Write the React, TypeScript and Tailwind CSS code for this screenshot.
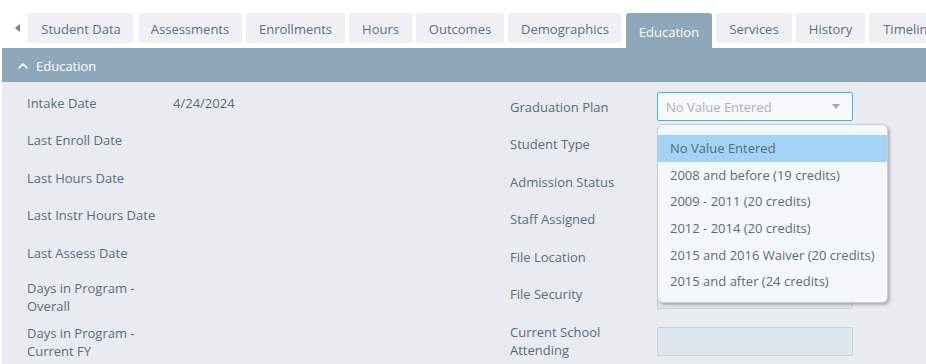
import { ChevronUp } from 'lucide-react';

const tabs = [
  { label: 'Student Data', width: 'w-[106px]' },
  { label: 'Assessments', width: 'w-[104px]' },
  { label: 'Enrollments', width: 'w-[99px]' },
  { label: 'Hours', width: 'w-[63px]' },
  { label: 'Outcomes', width: 'w-[88px]' },
  { label: 'Demographics', width: 'w-[114px]' },
  { label: 'Education', width: 'w-[86px]', active: true },
  { label: 'Services', width: 'w-[76px]' },
  { label: 'History', width: 'w-[69px]' },
  { label: 'Timeline', width: 'w-[80px]' },
];

const options = [
  'No Value Entered',
  '2008 and before (19 credits)',
  '2009 - 2011 (20 credits)',
  '2012 - 2014 (20 credits)',
  '2015 and 2016 Waiver (20 credits)',
  '2015 and after (24 credits)',
];

const rightRows = ['Student Type', 'Admission Status', 'Staff Assigned', 'File Location', 'File Security'];

const Field = () => (
  <div className="h-[29px] w-[196px] rounded-[2px] border border-[#c9d3db] bg-[#dde6ec]" />
);

export default function App() {
  return (
    <div className="h-[364px] w-[926px] overflow-hidden bg-white text-[13px] text-[#5c6b7d] font-['Open_Sans',sans-serif]">
      {/* tab strip */}
      <div className="flex items-start gap-[4px] pl-[10px] pt-[13px]">
        <div className="flex h-[30px] w-[14px] shrink-0 items-center justify-center">
          <span className="h-0 w-0 border-y-[4px] border-r-[5px] border-y-transparent border-r-[#7a7f86]" />
        </div>
        {tabs.map((tab) =>
          tab.active ? (
            <div
              key={tab.label}
              className={`${tab.width} flex h-[35px] shrink-0 items-center justify-center rounded-t-[3px] bg-[#8fa7ba] pt-[5px] text-white`}
            >
              {tab.label}
            </div>
          ) : (
            <div
              key={tab.label}
              className={`${tab.width} flex h-[30px] shrink-0 items-center justify-center whitespace-nowrap rounded-[3px] bg-[#eff0f5] pt-[3px] text-[#5d6e83]`}
            >
              {tab.label}
            </div>
          )
        )}
      </div>

      {/* panel */}
      <div className="ml-[2px]">
        <div className="flex h-[34px] items-center gap-[5px] bg-[#8fa7ba] pl-[13px] pt-[3px] text-white">
          <ChevronUp size={16} strokeWidth={2.5} className="-mt-[2px]" />
          <span>Education</span>
        </div>

        <div className="flex h-[282px] bg-[#e8ebf0] pl-[25px]">
          {/* left column */}
          <div className="flex w-[483px] flex-col pt-[12px] leading-[18px]">
            <div className="flex h-[37px]">
              <span className="w-[146px]">Intake Date</span>
              <span>4/24/2024</span>
            </div>
            <div className="h-[38px]">Last Enroll Date</div>
            <div className="h-[37px]">Last Hours Date</div>
            <div className="h-[38px]">Last Instr Hours Date</div>
            <div className="h-[35px]">Last Assess Date</div>
            <div className="h-[45px]">
              Days in Program -<br />Overall
            </div>
            <div>
              Days in Program -<br />Current FY
            </div>
          </div>

          {/* right column */}
          <div className="flex flex-col gap-[8.5px] pt-[10px] leading-[18px]">
            <div className="flex items-center">
              <span className="w-[147px]">Graduation Plan</span>
              <div className="relative">
                <div className="flex h-[29px] w-[196px] items-center justify-between rounded-[2px] border border-[#46b1dc] bg-[#f6f8fb] pl-[8px] pr-[12px] text-[#a8b1bb]">
                  <span>No Value Entered</span>
                  <span className="h-0 w-0 border-x-[4px] border-t-[5px] border-x-transparent border-t-[#a3aab2]" />
                </div>
                <div className="absolute left-0 top-[32px] z-10 h-[179px] w-[231px] rounded-[6px] border border-[#c7ced5] bg-[#f4f7fc] pt-[10px] shadow-[2px_2px_3px_rgba(0,0,0,0.25)]">
                  {options.map((opt, i) => (
                    <div
                      key={opt}
                      className={`flex h-[26.6px] items-center whitespace-nowrap pl-[12px] ${i === 0 ? 'bg-[#a3d3f5]' : ''}`}
                    >
                      {opt}
                    </div>
                  ))}
                </div>
              </div>
            </div>
            {rightRows.map((label) => (
              <div key={label} className="flex items-center">
                <span className="w-[147px]">{label}</span>
                <Field />
              </div>
            ))}
            <div className="mt-[6px] flex items-center">
              <span className="w-[147px]">
                Current School<br />Attending
              </span>
              <Field />
            </div>
          </div>
        </div>
      </div>
    </div>
  );
}
